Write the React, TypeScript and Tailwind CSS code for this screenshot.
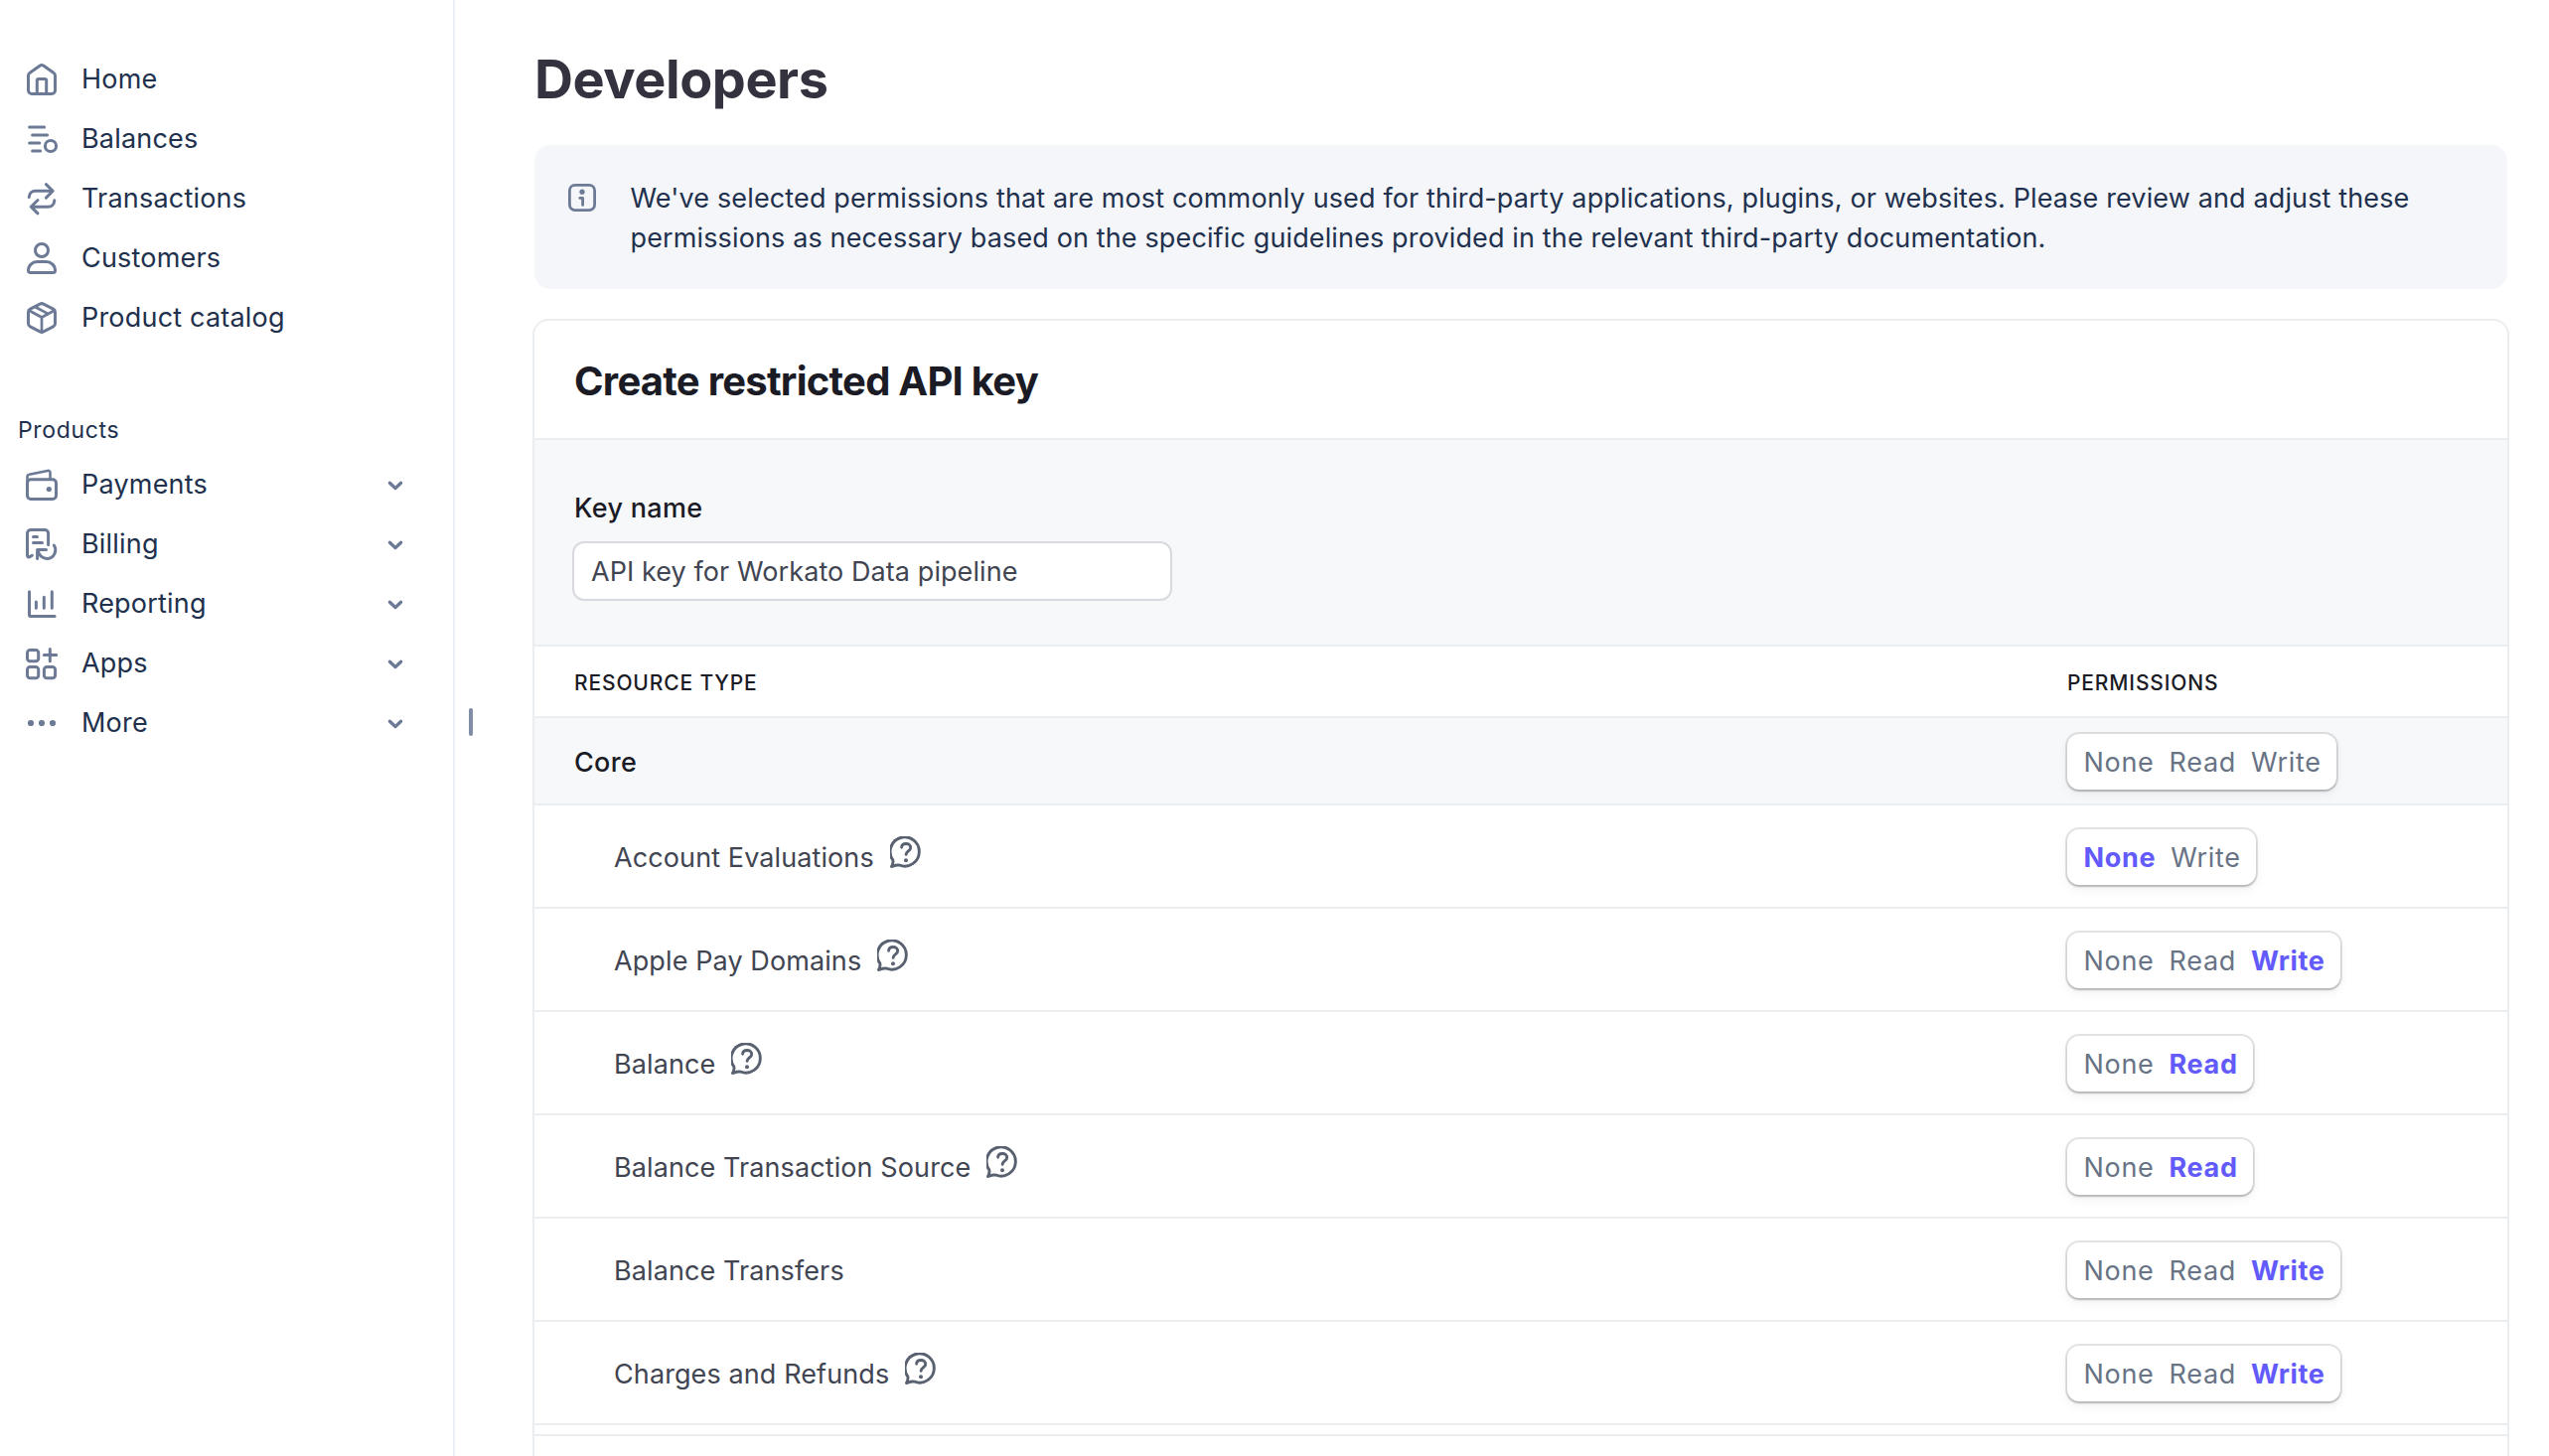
import React from 'react';
import clsx from 'clsx';

type IconProps = { children: React.ReactNode };

const NavIcon = ({ children }: IconProps) => (
  <svg
    className="size-8 shrink-0 overflow-visible text-[#6c7a96]"
    viewBox="0 0 32 32"
    fill="none"
    stroke="currentColor"
    strokeWidth={3}
    strokeLinecap="round"
    strokeLinejoin="round"
  >
    {children}
  </svg>
);

const HomeIcon = () => (
  <NavIcon>
    <path d="M2.5 12.2c0-1.2.6-2.3 1.6-2.9L14 2.2c1.3-.8 2.7-.8 4 0l9.9 7.1c1 .6 1.6 1.7 1.6 2.9V27a3.5 3.5 0 0 1-3.5 3.5H6A3.5 3.5 0 0 1 2.5 27z" />
    <path d="M11.3 30.5V17a1.5 1.5 0 0 1 1.5-1.5h6.4a1.5 1.5 0 0 1 1.5 1.5v13.5" />
  </NavIcon>
);

const BalancesIcon = () => (
  <NavIcon>
    <path d="M3.6 4h15M6.6 12h15M3.6 20h10.2M6.6 28h8" />
    <circle cx="25" cy="23" r="5.6" />
  </NavIcon>
);

const TransactionsIcon = () => (
  <NavIcon>
    <path d="M3.2 14.6C3.4 11 5.8 8.3 9.6 8.3H26M20.4 1.6l6.8 6.7-6.8 6.8" />
    <path d="M28.8 17.8c-.2 3.6-2.6 6.4-6.4 6.4H6M12 17.5l-6.8 6.7 6.8 6.6" />
  </NavIcon>
);

const CustomersIcon = () => (
  <NavIcon>
    <circle cx="16" cy="8" r="6.5" />
    <path d="M2.5 28.4c0-5.2 4-8.8 9-8.8h9c5 0 9 3.6 9 8.8a2.1 2.1 0 0 1-2.1 2.1H4.6a2.1 2.1 0 0 1-2.1-2.1z" />
  </NavIcon>
);

const CatalogIcon = () => (
  <NavIcon>
    <path d="M14.2 2.1a3.8 3.8 0 0 1 3.6 0l9.8 5.1c1.2.6 1.9 1.8 1.9 3.1v11.4c0 1.3-.7 2.5-1.9 3.1l-9.8 5.1a3.8 3.8 0 0 1-3.6 0l-9.8-5.1a3.5 3.5 0 0 1-1.9-3.1V10.3c0-1.3.7-2.5 1.9-3.1z" />
    <path d="M3.5 8.8 16 15.500l12.500-6.700M16 15.500V30" strokeWidth={2.700} />
    <path d="m9.800 5.200 12 6.400" strokeWidth={2.700} />
  </NavIcon>
);

const PaymentsIcon = () => (
  <NavIcon>
    <rect x="1.5" y="10.800" width="29" height="19.700" rx="3.5" />
    <path d="M1.5 14V8.1c0-1.1.8-2.1 1.900-2.300L22 1.900c1.300-.3 2.500.6 2.500 1.900v6.500" strokeWidth={2.600} />
    <circle cx="23.300" cy="20.500" r="2.600" fill="currentColor" stroke="none" />
  </NavIcon>
);

const BillingIcon = () => (
  <NavIcon>
    <path d="M22.600 16.500V5a3.500 3.500 0 0 0-3.500-3.500H5A3.500 3.500 0 0 0 1.500 5v22.300c0 1.500 1.400 2 2.500 1.300l2.300-1.300" />
    <path d="M7.500 8.500h4M7.500 14.500h9" />
    <path d="M20.500 21.600h-8.900v9M12.300 22.800a9.500 9.500 0 0 0 9.500 7.700 8.700 8.700 0 0 0 6.500-13.500" />
  </NavIcon>
);

const ReportingIcon = () => (
  <NavIcon>
    <path d="M3.500 3.800V27a1.600 1.600 0 0 0 1.600 1.600h24M10.400 14v6.300M18.300 9.200v11.100M26.300 3.800v16.500" />
  </NavIcon>
);

const AppsIcon = () => (
  <NavIcon>
    <rect x="1.500" y="2.500" width="11.200" height="11.200" rx="2.800" />
    <rect x="1.500" y="19.500" width="11.200" height="11.200" rx="2.800" />
    <rect x="18.400" y="19.500" width="11.200" height="11.200" rx="2.800" />
    <path d="M24.300 1.400v12.400M18.300 7.500h12.400" />
  </NavIcon>
);

const MoreIcon = () => (
  <NavIcon>
    <g fill="currentColor" stroke="none">
      <circle cx="5" cy="16" r="3.1" />
      <circle cx="16" cy="16" r="3.1" />
      <circle cx="27" cy="16" r="3.1" />
    </g>
  </NavIcon>
);

const Chevron = () => (
  <svg className="h-4 w-4 text-[#6c7a96]" viewBox="0 0 16 16" fill="none" stroke="currentColor" strokeWidth={3.3} strokeLinecap="round" strokeLinejoin="round">
    <path d="M2.4 6.2 8 11.6l5.6-5.4" />
  </svg>
);

const InfoIcon = () => (
  <svg className="mt-[7px] size-7 shrink-0 text-[#6c7a96]" viewBox="0 0 28 28" fill="none" stroke="currentColor" strokeWidth={2.8} strokeLinecap="round" strokeLinejoin="round">
    <rect x="1.4" y="1.4" width="25.2" height="25.2" rx="5.5" />
    <path d="M11.8 14.4h2.8v7" />
    <circle cx="14" cy="8.2" r="2.6" fill="currentColor" stroke="none" />
  </svg>
);

const HelpIcon = () => (
  <svg className="mb-[10px] size-8 shrink-0 text-[#596171]" viewBox="0 0 32 32" fill="none" stroke="currentColor" strokeWidth={2.9} strokeLinecap="round" strokeLinejoin="round">
    <path d="M1.5 30.500c1.200-2.200 1.900-4.300 1.300-6.600A14.600 14.600 0 1 1 9.700 29.200c-2.700-.9-5.200.3-8.200 1.300z" />
    <path d="M11.600 11.200c.2-2.300 2.100-3.700 4.500-3.700 2.600 0 4.600 1.500 4.600 3.900 0 3.500-4.600 3.500-4.600 7" />
    <circle cx="16" cy="24.300" r="2" fill="currentColor" stroke="none" />
  </svg>
);

const mainNav = [
  { label: 'Home', icon: HomeIcon },
  { label: 'Balances', icon: BalancesIcon },
  { label: 'Transactions', icon: TransactionsIcon },
  { label: 'Customers', icon: CustomersIcon },
  { label: 'Product catalog', icon: CatalogIcon },
];

const productNav = [
  { label: 'Payments', icon: PaymentsIcon },
  { label: 'Billing', icon: BillingIcon },
  { label: 'Reporting', icon: ReportingIcon },
  { label: 'Apps', icon: AppsIcon },
  { label: 'More', icon: MoreIcon },
];

const resources = [
  { name: 'Account Evaluations', help: true, options: ['None', 'Write'], selected: 'None' },
  { name: 'Apple Pay Domains', help: true, options: ['None', 'Read', 'Write'], selected: 'Write' },
  { name: 'Balance', help: true, options: ['None', 'Read'], selected: 'Read' },
  { name: 'Balance Transaction Source', help: true, options: ['None', 'Read'], selected: 'Read' },
  { name: 'Balance Transfers', help: false, options: ['None', 'Read', 'Write'], selected: 'Write' },
  { name: 'Charges and Refunds', help: true, options: ['None', 'Read', 'Write'], selected: 'Write' },
];

const PermissionGroup = ({ options, selected }: { options: string[]; selected?: string }) => (
  <div className="ml-px flex h-14 items-center gap-[15px] rounded-xl bg-white pt-0.5 pr-[15.5px] pl-[16.5px] shadow-[0_0_0_2px_rgba(0,0,0,0.1),0_2px_2px_0_rgba(0,0,0,0.16),0_4px_10px_0_rgba(64,68,82,0.08)]">
    {options.map((option) => (
      <button
        key={option}
        className={clsx(
          'text-[27px] leading-8',
          option === selected ? 'font-bold tracking-[0.65px] text-[#625afa]' : 'tracking-[0.7px] text-[#687385]'
        )}
      >
        {option}
      </button>
    ))}
  </div>
);

const NavItem = ({ label, icon: Icon, expandable }: { label: string; icon: React.ComponentType; expandable?: boolean }) => (
  <a className="flex h-15 items-center pr-[50px] pl-[26px]">
    <Icon />
    <span className="ml-6 flex-1 text-[27px] leading-9 tracking-[0.2px] text-[#21314d]">{label}</span>
    {expandable && <Chevron />}
  </a>
);

const App = () => {
  return (
    <div className="flex h-[1466px] overflow-hidden bg-white font-[Inter,sans-serif]">
      <aside className="w-[458px] shrink-0 border-r-2 border-[#ebeef4] pt-[50px]">
        <nav>
          {mainNav.map((item) => (
            <NavItem key={item.label} {...item} />
          ))}
        </nav>
        <h2 className="mt-[63px] mb-[5px] pl-[18px] text-[23px] leading-10 tracking-[0.65px] text-[#21314d]">Products</h2>
        <nav>
          {productNav.map((item) => (
            <NavItem key={item.label} {...item} expandable />
          ))}
        </nav>
      </aside>

      {/* sidebar resize handle */}
      <div className="mt-[713px] ml-[14px] h-7 w-1 shrink-0 rounded-sm bg-[#818ca5]" />

      <main className="ml-[60px] w-[1990px] shrink-0">
        <h1 className="mt-12 ml-0.5 text-[54px] leading-[64px] font-bold tracking-[-0.45px] text-[#353240]">Developers</h1>

        <div className="mx-0.5 mt-[34px] flex h-[145px] rounded-2xl bg-[#f5f6fa] pt-8 pl-[34px]">
          <InfoIcon />
          <p className="mt-[1.5px] ml-[34.5px] text-[27px] leading-10 tracking-[0.133px] text-[#21314d]">
            We've selected permissions that are most commonly used for third-party applications, plugins, or websites. Please review and adjust these
            <br />
            permissions as necessary based on the specific guidelines provided in the relevant third-party documentation.
          </p>
        </div>

        <section className="mt-[30px] h-[1200px] overflow-hidden rounded-t-2xl border-2 border-[#ebeef1] text-[#1a1b25]">
          <header className="flex h-[120px] items-center border-b-2 border-[#ebeef1] px-10 pt-1">
            <h2 className="text-[40px] leading-[56px] font-bold tracking-[-0.75px]">Create restricted API key</h2>
          </header>

          <div className="h-52 border-b-2 border-[#ebeef1] bg-[#f6f8fa] px-[38px] pt-[49px]">
            <label className="block pl-0.5 text-[27px] leading-10 font-medium tracking-[0.3px]">Key name</label>
            <input
              className="mt-[13px] block h-15 w-[604px] rounded-xl border-2 border-[#d8dadf] bg-white pr-4 pl-[17px] text-[27px] tracking-[0.08px] text-[#414552] outline-none"
              defaultValue="API key for Workato Data pipeline"
            />
          </div>

          <div className="flex h-[72px] items-center border-b-2 border-[#ebeef1] pt-1 pl-10 text-[21px] font-medium tracking-[0.85px]">
            <span className="w-[1503px]">RESOURCE TYPE</span>
            <span>PERMISSIONS</span>
          </div>

          <div className="flex h-[88px] items-center border-b-2 border-[#ebeef1] bg-[#f6f8fa] pt-0.5 pl-10">
            <span className="w-[1502px] pt-0.5 text-[27px] font-medium tracking-[0.3px]">Core</span>
            <PermissionGroup options={['None', 'Read', 'Write']} />
          </div>

          {resources.map((resource) => (
            <div key={resource.name} className="flex h-[104px] items-center border-b-2 border-[#ebeef1] pt-0.5 pl-20">
              <div className="flex w-[1462px] items-center gap-4">
                <span className="pt-0.5 text-[27px] tracking-[0.1px] text-[#414552]">{resource.name}</span>
                {resource.help && <HelpIcon />}
              </div>
              <PermissionGroup options={resource.options} selected={resource.selected} />
            </div>
          ))}

          <div className="h-[11px] border-b-2 border-[#ebeef1]" />
        </section>
      </main>
    </div>
  );
};

export default App;
